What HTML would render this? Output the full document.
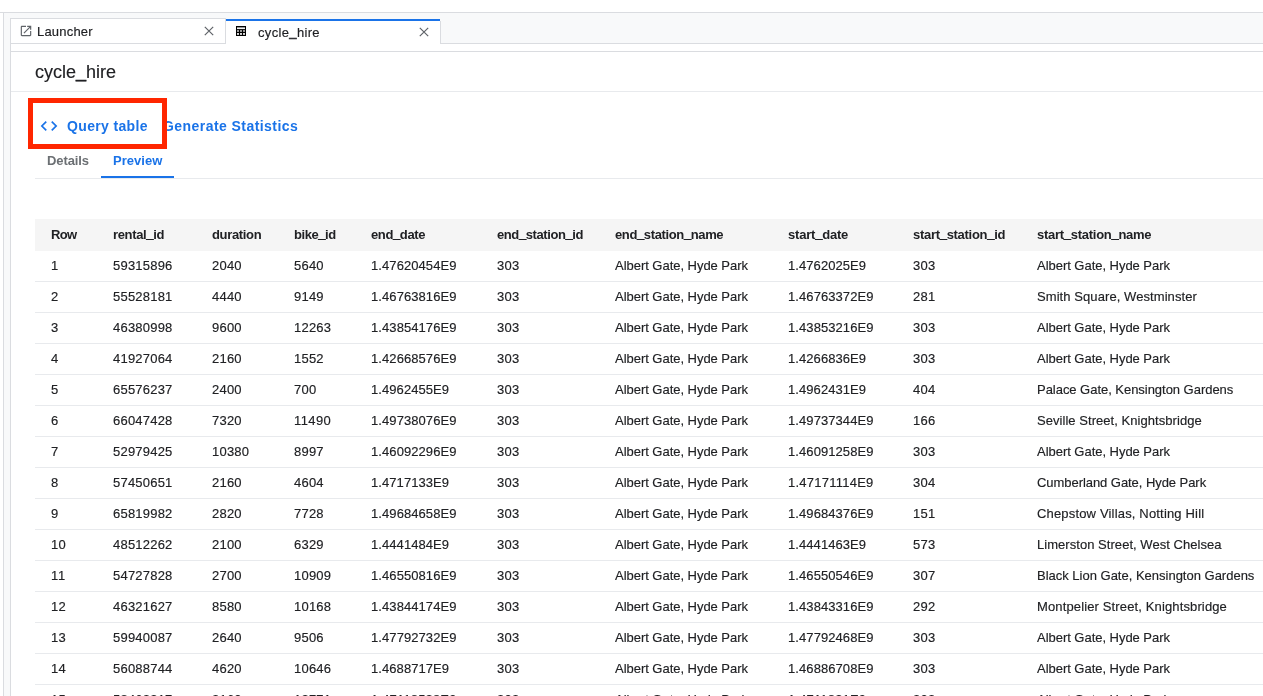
<!DOCTYPE html>
<html><head><meta charset="utf-8"><title>cycle_hire</title>
<style>
html,body{margin:0;padding:0;background:#fff;}
body{width:1263px;height:696px;overflow:hidden;position:relative;font-family:"Liberation Sans",sans-serif;color:#202124;}
.a{position:absolute;}
.ln{position:absolute;background:#dadce0;}
.t{position:absolute;white-space:nowrap;line-height:1;}
.hd{font-weight:bold;font-size:13px;color:#202124;}
.c{font-size:13px;color:#202124;-webkit-text-stroke:0.15px #202124;}
.r{-webkit-text-stroke:0.15px #202124;}
.b{font-weight:bold;}
.u{position:relative;top:-1px;-webkit-text-stroke:0.45px currentColor;}
</style></head><body><div class="a" style="left:0;top:0;width:1263px;height:696px;will-change:transform">
<div class="ln" style="left:0;top:12px;width:1263px;height:1px"></div>
<div class="a" style="left:4px;top:13px;width:1259px;height:30px;background:#f8f9fa"></div>
<div class="a" style="left:4px;top:43px;width:6px;height:653px;background:#f8f9fa"></div>
<div class="ln" style="left:3px;top:13px;width:1px;height:683px"></div>
<div class="a" style="left:10px;top:44px;width:1253px;height:652px;background:#fff"></div>
<div class="ln" style="left:10px;top:43px;width:1253px;height:1px"></div>
<div class="ln" style="left:10px;top:51px;width:1253px;height:1px"></div>
<div class="ln" style="left:10px;top:44px;width:1px;height:652px"></div>
<div class="ln" style="left:11px;top:91px;width:1252px;height:1px;background:#e8eaed"></div>
<div class="a" style="left:10px;top:18px;width:216px;height:25px;background:#fff;border:1px solid #dadce0;border-bottom:none;box-sizing:border-box"></div>
<div class="a" style="left:226px;top:19px;width:214px;height:25px;background:#fff"></div>
<div class="ln" style="left:440px;top:21px;width:1px;height:23px"></div>
<div class="a" style="left:226px;top:19px;width:214px;height:2px;background:#1a73e8"></div>
<svg class="a" style="left:19px;top:24px" width="14" height="14" viewBox="0 0 24 24"><path fill="#5f6368" d="M19 19H5V5h7V3H5c-1.110 0-2 .9-2 2v14c0 1.100.890 2 2 2h14c1.100 0 2-.9 2-2v-7h-2v7zM14 3v2h3.590l-9.830 9.830 1.410 1.410L19 6.410V10h2V3h-7z"/></svg>
<span class="t r" style="left:37px;top:25px;font-size:13px;color:#202124;letter-spacing:0.198px">Launcher</span>
<svg class="a" style="left:203px;top:25px" width="12" height="12" viewBox="0 0 12 12"><path d="M1.800 1.800L10.200 10.200M10.200 1.800L1.800 10.200" stroke="#5f6368" stroke-width="1.2" fill="none"/></svg>
<svg class="a" style="left:236px;top:26px" width="10" height="10" viewBox="0 0 10 10"><rect width="10" height="10" fill="#000"/><rect x="1" y="1" width="8" height="0.600" fill="#fff" opacity="0.350"/><rect x="1" y="1.500" width="8" height="1.600" fill="#fff" opacity="0.950"/><g fill="#fff" opacity="0.600"><rect x="1" y="4" width="2" height="2"/><rect x="4" y="4" width="2" height="2"/><rect x="7" y="4" width="2" height="2"/></g><g fill="#fff" opacity="0.850"><rect x="1" y="7" width="2" height="1.900"/><rect x="4" y="7" width="2" height="1.900"/><rect x="7" y="7" width="2" height="1.900"/></g></svg>
<span class="t r" style="left:258px;top:26px;font-size:13px;color:#202124;letter-spacing:0.337px">cycle<span class="u">_</span>hire</span>
<svg class="a" style="left:418px;top:26px" width="12" height="12" viewBox="0 0 12 12"><path d="M1.800 1.800L10.200 10.200M10.200 1.800L1.800 10.200" stroke="#5f6368" stroke-width="1.2" fill="none"/></svg>
<span class="t r" style="left:35px;top:63px;font-size:18px;color:#202124;letter-spacing:-0.015px">cycle<span class="u">_</span>hire</span>
<svg class="a" style="left:39px;top:116px" width="20" height="20" viewBox="0 0 24 24"><path fill="#1a73e8" d="M9.400 16.600L4.800 12l4.600-4.600L8 6l-6 6 6 6 1.400-1.400zm5.200 0l4.600-4.600-4.600-4.600L16 6l6 6-6 6-1.400-1.400z"/></svg>
<span class="t b" style="left:67px;top:119px;font-size:14px;color:#1a73e8;letter-spacing:0.343px">Query table</span>
<span class="t b" style="left:163px;top:119px;font-size:14px;color:#1a73e8;letter-spacing:0.440px">Generate Statistics</span>
<div class="a" style="left:28px;top:98px;width:139px;height:51px;border:5px solid #ff2600;box-sizing:border-box"></div>
<span class="t b" style="left:47px;top:154px;font-size:13px;color:#6b6f73;letter-spacing:-0.106px">Details</span>
<span class="t b" style="left:113px;top:154px;font-size:13px;color:#1a73e8;letter-spacing:0.035px">Preview</span>
<div class="ln" style="left:35px;top:178px;width:1228px;height:1px;background:#e8eaed"></div>
<div class="a" style="left:101px;top:176px;width:73px;height:2px;background:#1a73e8"></div>
<div class="a" style="left:35px;top:219px;width:1228px;height:32px;background:#f5f5f5"></div>
<span class="t hd" style="left:51px;top:228px;letter-spacing:-0.605px">Row</span>
<span class="t hd" style="left:113px;top:228px;letter-spacing:-0.348px">rental<span class="u">_</span>id</span>
<span class="t hd" style="left:212px;top:228px;letter-spacing:-0.337px">duration</span>
<span class="t hd" style="left:294px;top:228px;letter-spacing:-0.445px">bike<span class="u">_</span>id</span>
<span class="t hd" style="left:371px;top:228px;letter-spacing:-0.372px">end<span class="u">_</span>date</span>
<span class="t hd" style="left:497px;top:228px;letter-spacing:-0.407px">end<span class="u">_</span>station<span class="u">_</span>id</span>
<span class="t hd" style="left:615px;top:228px;letter-spacing:-0.371px">end<span class="u">_</span>station<span class="u">_</span>name</span>
<span class="t hd" style="left:788px;top:228px;letter-spacing:-0.202px">start<span class="u">_</span>date</span>
<span class="t hd" style="left:913px;top:228px;letter-spacing:-0.296px">start<span class="u">_</span>station<span class="u">_</span>id</span>
<span class="t hd" style="left:1037px;top:228px;letter-spacing:-0.276px">start<span class="u">_</span>station<span class="u">_</span>name</span>
<div class="ln" style="left:35px;top:281px;width:1228px;height:1px;background:#e8eaed"></div>
<span class="t c" style="left:51px;top:259px;letter-spacing:0.218px">1</span>
<span class="t c" style="left:113px;top:259px;letter-spacing:0.216px">59315896</span>
<span class="t c" style="left:212px;top:259px;letter-spacing:0.218px">2040</span>
<span class="t c" style="left:294px;top:259px;letter-spacing:0.218px">5640</span>
<span class="t c" style="left:371px;top:259px;letter-spacing:0.081px">1.47620454E9</span>
<span class="t c" style="left:497px;top:259px;letter-spacing:0.213px">303</span>
<span class="t c" style="left:615px;top:259px;letter-spacing:-0.032px">Albert Gate, Hyde Park</span>
<span class="t c" style="left:788px;top:259px;letter-spacing:0.069px">1.4762025E9</span>
<span class="t c" style="left:913px;top:259px;letter-spacing:0.213px">303</span>
<span class="t c" style="left:1037px;top:259px;letter-spacing:-0.032px">Albert Gate, Hyde Park</span>
<div class="ln" style="left:35px;top:312px;width:1228px;height:1px;background:#e8eaed"></div>
<span class="t c" style="left:51px;top:290px;letter-spacing:0.218px">2</span>
<span class="t c" style="left:113px;top:290px;letter-spacing:0.216px">55528181</span>
<span class="t c" style="left:212px;top:290px;letter-spacing:0.218px">4440</span>
<span class="t c" style="left:294px;top:290px;letter-spacing:0.218px">9149</span>
<span class="t c" style="left:371px;top:290px;letter-spacing:0.081px">1.46763816E9</span>
<span class="t c" style="left:497px;top:290px;letter-spacing:0.213px">303</span>
<span class="t c" style="left:615px;top:290px;letter-spacing:-0.032px">Albert Gate, Hyde Park</span>
<span class="t c" style="left:788px;top:290px;letter-spacing:0.081px">1.46763372E9</span>
<span class="t c" style="left:913px;top:290px;letter-spacing:0.213px">281</span>
<span class="t c" style="left:1037px;top:290px;letter-spacing:0.077px">Smith Square, Westminster</span>
<div class="ln" style="left:35px;top:343px;width:1228px;height:1px;background:#e8eaed"></div>
<span class="t c" style="left:51px;top:321px;letter-spacing:0.218px">3</span>
<span class="t c" style="left:113px;top:321px;letter-spacing:0.216px">46380998</span>
<span class="t c" style="left:212px;top:321px;letter-spacing:0.218px">9600</span>
<span class="t c" style="left:294px;top:321px;letter-spacing:0.215px">12263</span>
<span class="t c" style="left:371px;top:321px;letter-spacing:0.081px">1.43854176E9</span>
<span class="t c" style="left:497px;top:321px;letter-spacing:0.213px">303</span>
<span class="t c" style="left:615px;top:321px;letter-spacing:-0.032px">Albert Gate, Hyde Park</span>
<span class="t c" style="left:788px;top:321px;letter-spacing:0.081px">1.43853216E9</span>
<span class="t c" style="left:913px;top:321px;letter-spacing:0.213px">303</span>
<span class="t c" style="left:1037px;top:321px;letter-spacing:-0.032px">Albert Gate, Hyde Park</span>
<div class="ln" style="left:35px;top:374px;width:1228px;height:1px;background:#e8eaed"></div>
<span class="t c" style="left:51px;top:352px;letter-spacing:0.218px">4</span>
<span class="t c" style="left:113px;top:352px;letter-spacing:0.216px">41927064</span>
<span class="t c" style="left:212px;top:352px;letter-spacing:0.218px">2160</span>
<span class="t c" style="left:294px;top:352px;letter-spacing:0.218px">1552</span>
<span class="t c" style="left:371px;top:352px;letter-spacing:0.081px">1.42668576E9</span>
<span class="t c" style="left:497px;top:352px;letter-spacing:0.213px">303</span>
<span class="t c" style="left:615px;top:352px;letter-spacing:-0.032px">Albert Gate, Hyde Park</span>
<span class="t c" style="left:788px;top:352px;letter-spacing:0.069px">1.4266836E9</span>
<span class="t c" style="left:913px;top:352px;letter-spacing:0.213px">303</span>
<span class="t c" style="left:1037px;top:352px;letter-spacing:-0.032px">Albert Gate, Hyde Park</span>
<div class="ln" style="left:35px;top:405px;width:1228px;height:1px;background:#e8eaed"></div>
<span class="t c" style="left:51px;top:383px;letter-spacing:0.218px">5</span>
<span class="t c" style="left:113px;top:383px;letter-spacing:0.216px">65576237</span>
<span class="t c" style="left:212px;top:383px;letter-spacing:0.218px">2400</span>
<span class="t c" style="left:294px;top:383px;letter-spacing:0.213px">700</span>
<span class="t c" style="left:371px;top:383px;letter-spacing:0.069px">1.4962455E9</span>
<span class="t c" style="left:497px;top:383px;letter-spacing:0.213px">303</span>
<span class="t c" style="left:615px;top:383px;letter-spacing:-0.032px">Albert Gate, Hyde Park</span>
<span class="t c" style="left:788px;top:383px;letter-spacing:0.069px">1.4962431E9</span>
<span class="t c" style="left:913px;top:383px;letter-spacing:0.213px">404</span>
<span class="t c" style="left:1037px;top:383px;letter-spacing:-0.034px">Palace Gate, Kensington Gardens</span>
<div class="ln" style="left:35px;top:436px;width:1228px;height:1px;background:#e8eaed"></div>
<span class="t c" style="left:51px;top:414px;letter-spacing:0.218px">6</span>
<span class="t c" style="left:113px;top:414px;letter-spacing:0.216px">66047428</span>
<span class="t c" style="left:212px;top:414px;letter-spacing:0.218px">7320</span>
<span class="t c" style="left:294px;top:414px;letter-spacing:0.409px">11490</span>
<span class="t c" style="left:371px;top:414px;letter-spacing:0.081px">1.49738076E9</span>
<span class="t c" style="left:497px;top:414px;letter-spacing:0.213px">303</span>
<span class="t c" style="left:615px;top:414px;letter-spacing:-0.032px">Albert Gate, Hyde Park</span>
<span class="t c" style="left:788px;top:414px;letter-spacing:0.081px">1.49737344E9</span>
<span class="t c" style="left:913px;top:414px;letter-spacing:0.213px">166</span>
<span class="t c" style="left:1037px;top:414px;letter-spacing:0.049px">Seville Street, Knightsbridge</span>
<div class="ln" style="left:35px;top:467px;width:1228px;height:1px;background:#e8eaed"></div>
<span class="t c" style="left:51px;top:445px;letter-spacing:0.218px">7</span>
<span class="t c" style="left:113px;top:445px;letter-spacing:0.216px">52979425</span>
<span class="t c" style="left:212px;top:445px;letter-spacing:0.215px">10380</span>
<span class="t c" style="left:294px;top:445px;letter-spacing:0.218px">8997</span>
<span class="t c" style="left:371px;top:445px;letter-spacing:0.081px">1.46092296E9</span>
<span class="t c" style="left:497px;top:445px;letter-spacing:0.213px">303</span>
<span class="t c" style="left:615px;top:445px;letter-spacing:-0.032px">Albert Gate, Hyde Park</span>
<span class="t c" style="left:788px;top:445px;letter-spacing:0.081px">1.46091258E9</span>
<span class="t c" style="left:913px;top:445px;letter-spacing:0.213px">303</span>
<span class="t c" style="left:1037px;top:445px;letter-spacing:-0.032px">Albert Gate, Hyde Park</span>
<div class="ln" style="left:35px;top:498px;width:1228px;height:1px;background:#e8eaed"></div>
<span class="t c" style="left:51px;top:476px;letter-spacing:0.218px">8</span>
<span class="t c" style="left:113px;top:476px;letter-spacing:0.216px">57450651</span>
<span class="t c" style="left:212px;top:476px;letter-spacing:0.218px">2160</span>
<span class="t c" style="left:294px;top:476px;letter-spacing:0.218px">4604</span>
<span class="t c" style="left:371px;top:476px;letter-spacing:0.069px">1.4717133E9</span>
<span class="t c" style="left:497px;top:476px;letter-spacing:0.213px">303</span>
<span class="t c" style="left:615px;top:476px;letter-spacing:-0.032px">Albert Gate, Hyde Park</span>
<span class="t c" style="left:788px;top:476px;letter-spacing:0.243px">1.47171114E9</span>
<span class="t c" style="left:913px;top:476px;letter-spacing:0.213px">304</span>
<span class="t c" style="left:1037px;top:476px;letter-spacing:-0.055px">Cumberland Gate, Hyde Park</span>
<div class="ln" style="left:35px;top:529px;width:1228px;height:1px;background:#e8eaed"></div>
<span class="t c" style="left:51px;top:507px;letter-spacing:0.218px">9</span>
<span class="t c" style="left:113px;top:507px;letter-spacing:0.216px">65819982</span>
<span class="t c" style="left:212px;top:507px;letter-spacing:0.218px">2820</span>
<span class="t c" style="left:294px;top:507px;letter-spacing:0.218px">7728</span>
<span class="t c" style="left:371px;top:507px;letter-spacing:0.081px">1.49684658E9</span>
<span class="t c" style="left:497px;top:507px;letter-spacing:0.213px">303</span>
<span class="t c" style="left:615px;top:507px;letter-spacing:-0.032px">Albert Gate, Hyde Park</span>
<span class="t c" style="left:788px;top:507px;letter-spacing:0.081px">1.49684376E9</span>
<span class="t c" style="left:913px;top:507px;letter-spacing:0.213px">151</span>
<span class="t c" style="left:1037px;top:507px;letter-spacing:0.170px">Chepstow Villas, Notting Hill</span>
<div class="ln" style="left:35px;top:560px;width:1228px;height:1px;background:#e8eaed"></div>
<span class="t c" style="left:51px;top:538px;letter-spacing:0.218px">10</span>
<span class="t c" style="left:113px;top:538px;letter-spacing:0.216px">48512262</span>
<span class="t c" style="left:212px;top:538px;letter-spacing:0.218px">2100</span>
<span class="t c" style="left:294px;top:538px;letter-spacing:0.218px">6329</span>
<span class="t c" style="left:371px;top:538px;letter-spacing:0.069px">1.4441484E9</span>
<span class="t c" style="left:497px;top:538px;letter-spacing:0.213px">303</span>
<span class="t c" style="left:615px;top:538px;letter-spacing:-0.032px">Albert Gate, Hyde Park</span>
<span class="t c" style="left:788px;top:538px;letter-spacing:0.069px">1.4441463E9</span>
<span class="t c" style="left:913px;top:538px;letter-spacing:0.213px">573</span>
<span class="t c" style="left:1037px;top:538px;letter-spacing:0.043px">Limerston Street, West Chelsea</span>
<div class="ln" style="left:35px;top:591px;width:1228px;height:1px;background:#e8eaed"></div>
<span class="t c" style="left:51px;top:569px;letter-spacing:0.702px">11</span>
<span class="t c" style="left:113px;top:569px;letter-spacing:0.216px">54727828</span>
<span class="t c" style="left:212px;top:569px;letter-spacing:0.218px">2700</span>
<span class="t c" style="left:294px;top:569px;letter-spacing:0.215px">10909</span>
<span class="t c" style="left:371px;top:569px;letter-spacing:0.081px">1.46550816E9</span>
<span class="t c" style="left:497px;top:569px;letter-spacing:0.213px">303</span>
<span class="t c" style="left:615px;top:569px;letter-spacing:-0.032px">Albert Gate, Hyde Park</span>
<span class="t c" style="left:788px;top:569px;letter-spacing:0.081px">1.46550546E9</span>
<span class="t c" style="left:913px;top:569px;letter-spacing:0.213px">307</span>
<span class="t c" style="left:1037px;top:569px;letter-spacing:-0.005px">Black Lion Gate, Kensington Gardens</span>
<div class="ln" style="left:35px;top:622px;width:1228px;height:1px;background:#e8eaed"></div>
<span class="t c" style="left:51px;top:600px;letter-spacing:0.218px">12</span>
<span class="t c" style="left:113px;top:600px;letter-spacing:0.216px">46321627</span>
<span class="t c" style="left:212px;top:600px;letter-spacing:0.218px">8580</span>
<span class="t c" style="left:294px;top:600px;letter-spacing:0.215px">10168</span>
<span class="t c" style="left:371px;top:600px;letter-spacing:0.081px">1.43844174E9</span>
<span class="t c" style="left:497px;top:600px;letter-spacing:0.213px">303</span>
<span class="t c" style="left:615px;top:600px;letter-spacing:-0.032px">Albert Gate, Hyde Park</span>
<span class="t c" style="left:788px;top:600px;letter-spacing:0.081px">1.43843316E9</span>
<span class="t c" style="left:913px;top:600px;letter-spacing:0.213px">292</span>
<span class="t c" style="left:1037px;top:600px;letter-spacing:0.133px">Montpelier Street, Knightsbridge</span>
<div class="ln" style="left:35px;top:653px;width:1228px;height:1px;background:#e8eaed"></div>
<span class="t c" style="left:51px;top:631px;letter-spacing:0.218px">13</span>
<span class="t c" style="left:113px;top:631px;letter-spacing:0.216px">59940087</span>
<span class="t c" style="left:212px;top:631px;letter-spacing:0.218px">2640</span>
<span class="t c" style="left:294px;top:631px;letter-spacing:0.218px">9506</span>
<span class="t c" style="left:371px;top:631px;letter-spacing:0.081px">1.47792732E9</span>
<span class="t c" style="left:497px;top:631px;letter-spacing:0.213px">303</span>
<span class="t c" style="left:615px;top:631px;letter-spacing:-0.032px">Albert Gate, Hyde Park</span>
<span class="t c" style="left:788px;top:631px;letter-spacing:0.081px">1.47792468E9</span>
<span class="t c" style="left:913px;top:631px;letter-spacing:0.213px">303</span>
<span class="t c" style="left:1037px;top:631px;letter-spacing:-0.032px">Albert Gate, Hyde Park</span>
<div class="ln" style="left:35px;top:684px;width:1228px;height:1px;background:#e8eaed"></div>
<span class="t c" style="left:51px;top:662px;letter-spacing:0.218px">14</span>
<span class="t c" style="left:113px;top:662px;letter-spacing:0.216px">56088744</span>
<span class="t c" style="left:212px;top:662px;letter-spacing:0.218px">4620</span>
<span class="t c" style="left:294px;top:662px;letter-spacing:0.215px">10646</span>
<span class="t c" style="left:371px;top:662px;letter-spacing:0.069px">1.4688717E9</span>
<span class="t c" style="left:497px;top:662px;letter-spacing:0.213px">303</span>
<span class="t c" style="left:615px;top:662px;letter-spacing:-0.032px">Albert Gate, Hyde Park</span>
<span class="t c" style="left:788px;top:662px;letter-spacing:0.081px">1.46886708E9</span>
<span class="t c" style="left:913px;top:662px;letter-spacing:0.213px">303</span>
<span class="t c" style="left:1037px;top:662px;letter-spacing:-0.032px">Albert Gate, Hyde Park</span>
<div class="ln" style="left:35px;top:715px;width:1228px;height:1px;background:#e8eaed"></div>
<span class="t c" style="left:51px;top:693px;letter-spacing:0.218px">15</span>
<span class="t c" style="left:113px;top:693px;letter-spacing:0.216px">58462317</span>
<span class="t c" style="left:212px;top:693px;letter-spacing:0.218px">2160</span>
<span class="t c" style="left:294px;top:693px;letter-spacing:0.215px">12771</span>
<span class="t c" style="left:371px;top:693px;letter-spacing:0.162px">1.47118528E9</span>
<span class="t c" style="left:497px;top:693px;letter-spacing:0.213px">303</span>
<span class="t c" style="left:615px;top:693px;letter-spacing:-0.032px">Albert Gate, Hyde Park</span>
<span class="t c" style="left:788px;top:693px;letter-spacing:0.157px">1.4711831E9</span>
<span class="t c" style="left:913px;top:693px;letter-spacing:0.213px">303</span>
<span class="t c" style="left:1037px;top:693px;letter-spacing:-0.032px">Albert Gate, Hyde Park</span>
</div></body></html>
